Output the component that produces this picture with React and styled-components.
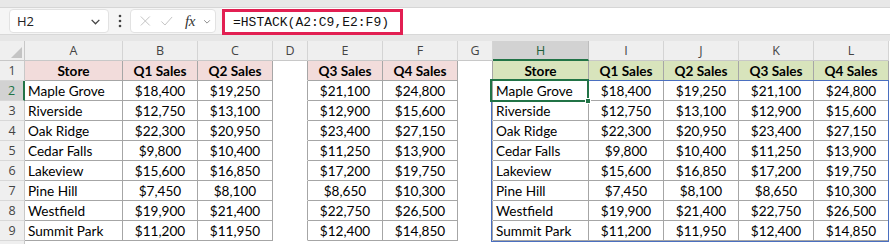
import React from "react";
import styled, { createGlobalStyle } from "styled-components";

const GlobalStyle = createGlobalStyle`
  html, body {
    margin: 0;
    padding: 0;
    background: #ffffff;
  }
  * {
    box-sizing: border-box;
  }
`;

const COLS = [
  { key: "A", w: 98 },
  { key: "B", w: 75 },
  { key: "C", w: 75 },
  { key: "D", w: 35 },
  { key: "E", w: 75 },
  { key: "F", w: 75 },
  { key: "G", w: 35 },
  { key: "H", w: 96 },
  { key: "I", w: 75 },
  { key: "J", w: 75 },
  { key: "K", w: 75 },
  { key: "L", w: 75 },
];

const stores = [
  ["Maple Grove", "$18,400", "$19,250", "$21,100", "$24,800"],
  ["Riverside", "$12,750", "$13,100", "$12,900", "$15,600"],
  ["Oak Ridge", "$22,300", "$20,950", "$23,400", "$27,150"],
  ["Cedar Falls", "$9,800", "$10,400", "$11,250", "$13,900"],
  ["Lakeview", "$15,600", "$16,850", "$17,200", "$19,750"],
  ["Pine Hill", "$7,450", "$8,100", "$8,650", "$10,300"],
  ["Westfield", "$19,900", "$21,400", "$22,750", "$26,500"],
  ["Summit Park", "$11,200", "$11,950", "$12,400", "$14,850"],
];

const Page = styled.div`
  width: 890px;
  height: 244px;
  overflow: hidden;
  background: #ffffff;
`;

const TopStrip = styled.div`
  height: 8px;
  background: #e8e8e8;
  border-bottom: 1px solid #d6d6d6;
`;

const FormulaRow = styled.div`
  height: 26px;
  display: flex;
  align-items: flex-start;
  background: #f5f5f5;
  position: relative;
`;

const NameBox = styled.div`
  margin: 1px 0 0 9px;
  width: 100px;
  height: 24px;
  background: #ffffff;
  border: 1px solid #e2e2e2;
  border-radius: 4px;
  display: flex;
  align-items: center;
  justify-content: space-between;
  padding: 0 7px 0 7px;
  font-family: "Open Sans", "Liberation Sans", sans-serif;
  font-size: 13px;
  color: #222;
`;

const Dots = styled.div`
  width: 21px;
  height: 26px;
  display: flex;
  align-items: center;
  justify-content: center;
`;

const FuncBox = styled.div`
  margin-top: 1px;
  width: 86px;
  height: 24px;
  background: #ffffff;
  border: 1px solid #e2e2e2;
  border-radius: 4px;
  display: flex;
  align-items: center;
  padding: 0 4px 0 8px;
  gap: 8px;
`;

const Fx = styled.span`
  font-family: "Liberation Serif", "DejaVu Serif", serif;
  font-style: italic;
  font-size: 15px;
  color: #333;
  margin-left: 4px;
  letter-spacing: -0.5px;
`;

const FormulaInput = styled.div`
  flex: 1;
  margin-left: 6px;
  height: 26px;
  background: #ffffff;
  position: relative;
`;

const Highlight = styled.div`
  position: absolute;
  left: 0;
  top: 1px;
  width: 181px;
  height: 26px;
  border: 3px solid #e21f52;
  display: flex;
  align-items: center;
  padding-left: 8px;
  font-family: "Liberation Mono", "DejaVu Sans Mono", monospace;
  font-size: 13px;
  color: #111;
`;

const Band = styled.div`
  height: 7px;
  background: #e6e6e6;
  border-top: 1px solid #d8d8d8;
`;

const Grid = styled.div`
  position: relative;
  display: grid;
  grid-template-columns: 25px ${COLS.map((c) => `${c.w}px`).join(" ")};
  grid-auto-rows: 20px;
`;

const ColHead = styled.div`
  display: flex;
  align-items: center;
  justify-content: center;
  background: ${(p) => (p.$active ? "#d2d2d2" : "#efefef")};
  border-right: 1px solid ${(p) => (p.$active ? "#bdbdbd" : "#d4d4d4")};
  border-bottom: ${(p) => (p.$active ? "2px solid #217346" : "1px solid #c8c8c8")};
  font-family: "Open Sans", "Liberation Sans", sans-serif;
  font-size: 12.5px;
  color: ${(p) => (p.$active ? "#1d5e3a" : "#444")};
  padding-top: ${(p) => (p.$active ? "1px" : "0")};
`;

const Corner = styled.div`
  background: #efefef;
  border-right: 1px solid #c8c8c8;
  border-bottom: 1px solid #c8c8c8;
  position: relative;
  overflow: hidden;
`;

const CornerTri = styled.div`
  position: absolute;
  right: 2px;
  bottom: 2px;
  width: 0;
  height: 0;
  border-left: 11px solid transparent;
  border-bottom: 11px solid #c4c4c4;
`;

const RowHead = styled.div`
  display: flex;
  align-items: center;
  justify-content: center;
  background: ${(p) => (p.$active ? "#d2d2d2" : "#efefef")};
  border-right: ${(p) => (p.$active ? "2px solid #217346" : "1px solid #c8c8c8")};
  border-bottom: 1px solid #d8d8d8;
  font-family: "Open Sans", "Liberation Sans", sans-serif;
  font-size: 12.5px;
  color: ${(p) => (p.$active ? "#217346" : "#444")};
`;

const Cell = styled.div`
  display: flex;
  align-items: center;
  justify-content: ${(p) => (p.$left ? "flex-start" : "center")};
  padding: 0 3px 0 3px;
  background: ${(p) => p.$bg || "#ffffff"};
  border-right: 1px solid ${(p) => (p.$ruled ? "#a6a6a6" : "transparent")};
  border-bottom: 1px solid ${(p) => (p.$lined ? "#a6a6a6" : "transparent")};
  font-family: "Lato", "Liberation Sans", sans-serif;
  font-size: 13.6px;
  font-weight: ${(p) => (p.$bold ? 700 : 400)};
  color: #000;
  white-space: nowrap;
`;

const SpillFrame = styled.div`
  position: absolute;
  left: 491px;
  top: 39px;
  width: 398px;
  height: 162px;
  border: 1px solid #4a6fc0;
  pointer-events: none;
`;

const ActiveCell = styled.div`
  position: absolute;
  left: 490px;
  top: 38px;
  width: 99px;
  height: 23px;
  border: 2px solid #217346;
  pointer-events: none;
`;

const FillHandle = styled.div`
  position: absolute;
  left: 585px;
  top: 57px;
  width: 6px;
  height: 6px;
  background: #217346;
  border: 1px solid #ffffff;
`;

const Chevron = ({ color = "#555", size = 10 }) => (
  <svg width={size} height={size} viewBox="0 0 10 10">
    <path d="M1.5 3.5 L5 7 L8.5 3.5" fill="none" stroke={color} strokeWidth="1.2" />
  </svg>
);

const PINK = "#f2dcdb";
const GREEN = "#d8e4bc";

function tableCell(col, r) {
  // r: 1 = header row, 2..9 data rows, 10 = partial row
  const inLeft = ["A", "B", "C"].includes(col);
  const inMid = ["E", "F"].includes(col);
  const inRight = ["H", "I", "J", "K", "L"].includes(col);
  const inTable = (inLeft || inMid || inRight) && r <= 9;
  const nextIsTable = (col === "D" || col === "G") && r <= 9;
  const props = {
    $ruled: inTable || nextIsTable,
    $lined: inTable,
  };
  if (r === 1) {
    props.$bold = true;
    if (inLeft || inMid) props.$bg = PINK;
    if (inRight) props.$bg = GREEN;
  }
  return props;
}

function cellText(col, r) {
  if (r === 1) {
    const heads = { A: "Store", B: "Q1 Sales", C: "Q2 Sales", E: "Q3 Sales", F: "Q4 Sales", H: "Store", I: "Q1 Sales", J: "Q2 Sales", K: "Q3 Sales", L: "Q4 Sales" };
    return heads[col] || "";
  }
  if (r > 9) return "";
  const s = stores[r - 2];
  const map = { A: s[0], B: s[1], C: s[2], E: s[3], F: s[4], H: s[0], I: s[1], J: s[2], K: s[3], L: s[4] };
  return map[col] || "";
}

export default function App() {
  const rows = [1, 2, 3, 4, 5, 6, 7, 8, 9, 10];
  return (
    <Page>
      <GlobalStyle />
      <TopStrip />
      <FormulaRow>
        <NameBox>
          <span>H2</span>
          <Chevron color="#444" size={11} />
        </NameBox>
        <Dots>
          <svg width="4" height="14" viewBox="0 0 4 14">
            <circle cx="2" cy="2" r="1.3" fill="#444" />
            <circle cx="2" cy="7" r="1.3" fill="#444" />
            <circle cx="2" cy="12" r="1.3" fill="#444" />
          </svg>
        </Dots>
        <FuncBox>
          <svg width="14" height="14" viewBox="0 0 14 14">
            <path d="M2 2 L12 12 M12 2 L2 12" stroke="#c2c2c2" strokeWidth="1.1" fill="none" />
          </svg>
          <svg width="15" height="14" viewBox="0 0 15 14">
            <path d="M1.5 7.5 L5.5 11.5 L13.5 2.5" stroke="#c2c2c2" strokeWidth="1.1" fill="none" />
          </svg>
          <Fx>fx</Fx>
          <Chevron color="#8a8a8a" size={9} />
        </FuncBox>
        <FormulaInput>
          <Highlight>=HSTACK(A2:C9,E2:F9)</Highlight>
        </FormulaInput>
      </FormulaRow>
      <Band />
      <Grid>
        <Corner>
          <CornerTri />
        </Corner>
        {COLS.map((c) => (
          <ColHead key={c.key} $active={c.key === "H"}>
            {c.key}
          </ColHead>
        ))}
        {rows.map((r) => (
          <React.Fragment key={r}>
            <RowHead $active={r === 2}>{r <= 9 ? r : ""}</RowHead>
            {COLS.map((c) => (
              <Cell key={c.key} $left={r > 1 && (c.key === "A" || c.key === "H")} {...tableCell(c.key, r)}>
                {cellText(c.key, r)}
              </Cell>
            ))}
          </React.Fragment>
        ))}
        <SpillFrame />
        <ActiveCell />
        <FillHandle />
      </Grid>
    </Page>
  );
}
